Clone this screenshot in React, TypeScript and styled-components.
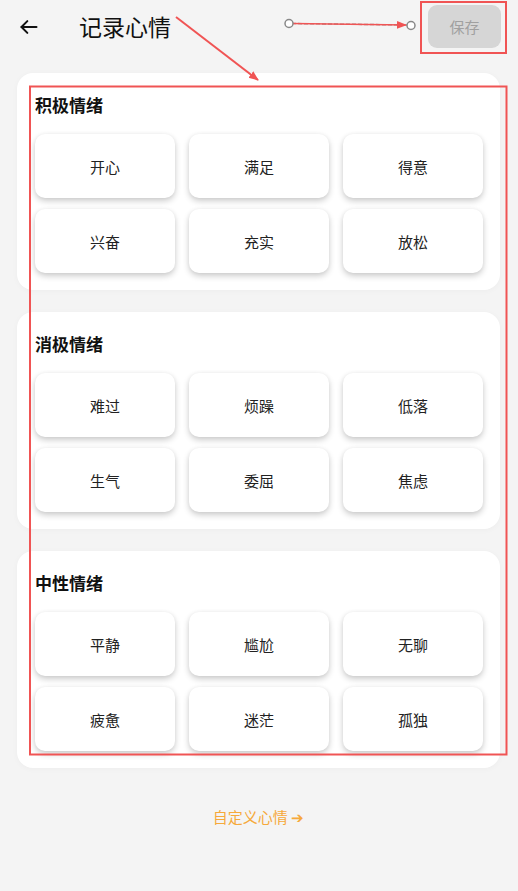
import React from "react";
import styled, { createGlobalStyle } from "styled-components";

const Global = createGlobalStyle`
  html, body { margin: 0; padding: 0; background: #f4f4f4; }
  body { font-family: "Noto Sans CJK SC", "Noto Sans", Roboto, sans-serif; }
  * { box-sizing: border-box; }
`;

const Page = styled.div`
  position: relative;
  width: 518px;
  min-height: 891px;
  background: #f4f4f4;
  padding: 0 18px 0 17px;
`;

const Header = styled.div`
  display: flex;
  align-items: center;
  height: 52px;
  padding-top: 1px;
`;

const Back = styled.button`
  width: 24px;
  height: 28px;
  margin-left: 2px;
  padding: 0;
  border: none;
  background: none;
  display: flex;
  align-items: center;
  justify-content: flex-start;
`;

const Title = styled.h1`
  margin: 0 0 0 36px;
  font-size: 23px;
  font-weight: 400;
  color: #111;
  line-height: 1;
`;

const Spacer = styled.div`
  flex: 1;
`;

const SaveButton = styled.button`
  width: 73px;
  height: 43px;
  border: none;
  border-radius: 9px;
  background: #d6d6d6;
  color: #a0a0a0;
  font-size: 15px;
  font-family: inherit;
  margin-right: -1px;
`;

const List = styled.div`
  display: flex;
  flex-direction: column;
  gap: 22px;
  margin-top: 21px;
`;

const Card = styled.section`
  background: #fff;
  border-radius: 16px;
  padding: 20px 17px 17px 18px;
  box-shadow: 0 1px 6px rgba(0, 0, 0, 0.03);
`;

const CardTitle = styled.h2`
  margin: 0 0 17px;
  font-size: 17px;
  line-height: 24px;
  font-weight: 700;
  color: #111;
`;

const Grid = styled.div`
  display: grid;
  grid-template-columns: repeat(3, 140px);
  column-gap: 14px;
  row-gap: 11px;
`;

const Mood = styled.button`
  height: 64px;
  border: none;
  border-radius: 10px;
  background: #fff;
  box-shadow: 0 3px 6px rgba(0, 0, 0, 0.2), 0 0 4px rgba(0, 0, 0, 0.04);
  font-family: inherit;
  font-size: 15px;
  color: #222;
`;

const Custom = styled.div`
  margin-top: 38px;
  text-align: center;
  color: #f6a93b;
  font-size: 15px;
  line-height: 22px;
`;

const Overlay = styled.svg`
  position: absolute;
  left: 0;
  top: 0;
  pointer-events: none;
`;

const groups = [
  { title: "积极情绪", items: ["开心", "满足", "得意", "兴奋", "充实", "放松"] },
  { title: "消极情绪", items: ["难过", "烦躁", "低落", "生气", "委屈", "焦虑"] },
  { title: "中性情绪", items: ["平静", "尴尬", "无聊", "疲惫", "迷茫", "孤独"] },
];

export default function App() {
  return (
    <>
      <Global />
      <Page>
        <Header>
          <Back aria-label="back">
            <svg width="20" height="20" viewBox="0 0 24 24" fill="none" stroke="#111" strokeWidth="2.4" strokeLinecap="round" strokeLinejoin="round">
              <path d="M21 12H3" />
              <path d="M10 5l-7 7 7 7" />
            </svg>
          </Back>
          <Title>记录心情</Title>
          <Spacer />
          <SaveButton>保存</SaveButton>
        </Header>
        <List>
          {groups.map((g) => (
            <Card key={g.title}>
              <CardTitle>{g.title}</CardTitle>
              <Grid>
                {g.items.map((m) => (
                  <Mood key={m}>{m}</Mood>
                ))}
              </Grid>
            </Card>
          ))}
        </List>
        <Custom>自定义心情 ➔</Custom>
        <Overlay width="518" height="891" viewBox="0 0 518 891">
          <defs>
            <marker id="ah" markerWidth="10" markerHeight="10" refX="9" refY="5" orient="auto" markerUnits="userSpaceOnUse">
              <path d="M0 1 L10 5 L0 9 z" fill="#f05454" />
            </marker>
          </defs>
          <line x1="292" y1="23.5" x2="407" y2="25" stroke="#999" strokeWidth="1.5" strokeDasharray="4 2" />
          <line x1="292" y1="23.5" x2="406" y2="25" stroke="#f05454" strokeWidth="1.5" markerEnd="url(#ah)" />
          <circle cx="289" cy="23.5" r="4" fill="#fff" stroke="#888" strokeWidth="1.5" />
          <circle cx="411" cy="25.5" r="4" fill="#fff" stroke="#888" strokeWidth="1.5" />
          <line x1="176" y1="17" x2="258" y2="80" stroke="#f05454" strokeWidth="2" markerEnd="url(#ah)" />
          <rect x="421" y="2" width="85" height="51" fill="none" stroke="#f05454" strokeWidth="2" />
          <rect x="30" y="86.5" width="476.5" height="668" fill="none" stroke="#f05454" strokeWidth="2" />
        </Overlay>
      </Page>
    </>
  );
}
